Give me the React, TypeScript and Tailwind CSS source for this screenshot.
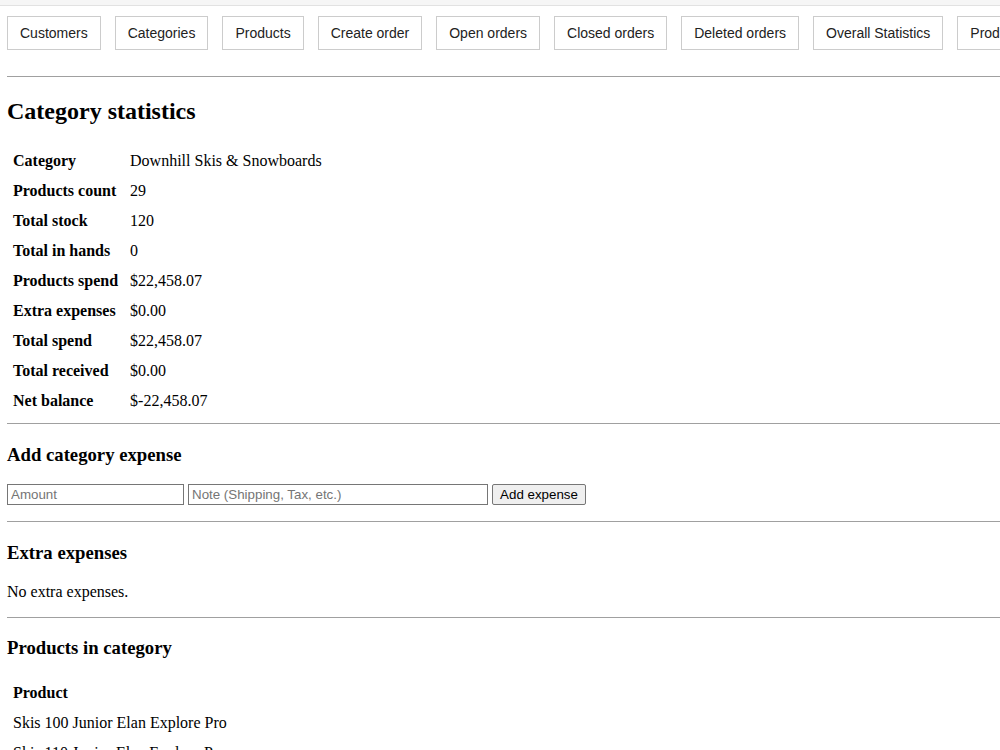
export default function App() {
  const tabs = ["Customers", "Categories", "Products", "Create order", "Open orders", "Closed orders", "Deleted orders", "Overall Statistics", "Product statistics"];
  const stats: [string, string][] = [
    ["Category", "Downhill Skis & Snowboards"],
    ["Products count", "29"],
    ["Total stock", "120"],
    ["Total in hands", "0"],
    ["Products spend", "$22,458.07"],
    ["Extra expenses", "$0.00"],
    ["Total spend", "$22,458.07"],
    ["Total received", "$0.00"],
    ["Net balance", "$-22,458.07"],
  ];
  const products = ["Skis 100 Junior Elan Explore Pro", "Skis 110 Junior Elan Explore Pro", "Skis 120 Junior Elan Explore Pro"];

  return (
    <div className="w-[1000px] h-[750px] overflow-hidden bg-white text-black font-['Liberation_Serif',serif]">
      {/* top strip */}
      <div className="h-[6px] bg-[#f6f6f6] border-b border-[#e2e2e2]"></div>

      {/* Nav */}
      <div className="flex gap-[14px] mt-[10px] pl-[7px] whitespace-nowrap font-['Liberation_Sans',Arial,sans-serif]">
        {tabs.map(t => (
          <button
            key={t}
            className="shrink-0 h-[34px] px-[12px] bg-white border border-[#cccccc] text-[14px] leading-[16px] text-[#222]"
          >
            {t}
          </button>
        ))}
      </div>

      <hr className="mt-[26px] ml-[7px] border-[#a0a0a0]" />

      <div className="pl-[7px]">
        <h2 className="mt-[20px] text-[24px] leading-[28px] font-bold">Category statistics</h2>

        <table className="mt-[20px] border-separate border-spacing-[2px] text-[16px] leading-[18px]">
          <tbody>
            {stats.map(([k, v]) => (
              <tr key={k}>
                <td className="pt-[5px] pb-[5px] pl-[4px] pr-[6px] font-bold">{k}</td>
                <td className="py-[5px] px-[4px]">{v}</td>
              </tr>
            ))}
          </tbody>
        </table>
      </div>

      <hr className="mt-[6px] ml-[7px] border-[#a0a0a0]" />

      <div className="pl-[7px]">
        <h3 className="mt-[20px] text-[18.72px] leading-[22px] font-bold">Add category expense</h3>
        <div className="mt-[18px] flex items-center gap-[4px] font-['Liberation_Sans',Arial,sans-serif] text-[13.33px]">
          <input
            placeholder="Amount"
            className="w-[177px] h-[21px] px-[3px] border border-[#767676] placeholder:text-[#757575] outline-none"
          />
          <input
            placeholder="Note (Shipping, Tax, etc.)"
            className="w-[300px] h-[21px] px-[3px] border border-[#767676] placeholder:text-[#757575] outline-none"
          />
          <button className="w-[94px] h-[21px] bg-[#efefef] border border-[#767676] rounded-[2px] text-black leading-[15px]">
            Add expense
          </button>
        </div>
      </div>

      <hr className="mt-[16px] ml-[7px] border-[#a0a0a0]" />

      <div className="pl-[7px]">
        <h3 className="mt-[20px] text-[18.72px] leading-[22px] font-bold">Extra expenses</h3>
        <p className="mt-[19px] text-[16px] leading-[18px]">No extra expenses.</p>
      </div>

      <hr className="mt-[16px] ml-[7px] border-[#a0a0a0]" />

      <div className="pl-[7px]">
        <h3 className="mt-[19px] text-[18.72px] leading-[22px] font-bold">Products in category</h3>
        <table className="mt-[18px] border-separate border-spacing-[2px] text-[16px] leading-[18px]">
          <thead>
            <tr>
              <th className="py-[5px] px-[4px] font-bold text-left">Product</th>
            </tr>
          </thead>
          <tbody>
            {products.map(p => (
              <tr key={p}>
                <td className="py-[5px] px-[4px]">{p}</td>
              </tr>
            ))}
          </tbody>
        </table>
      </div>
    </div>
  );
}
